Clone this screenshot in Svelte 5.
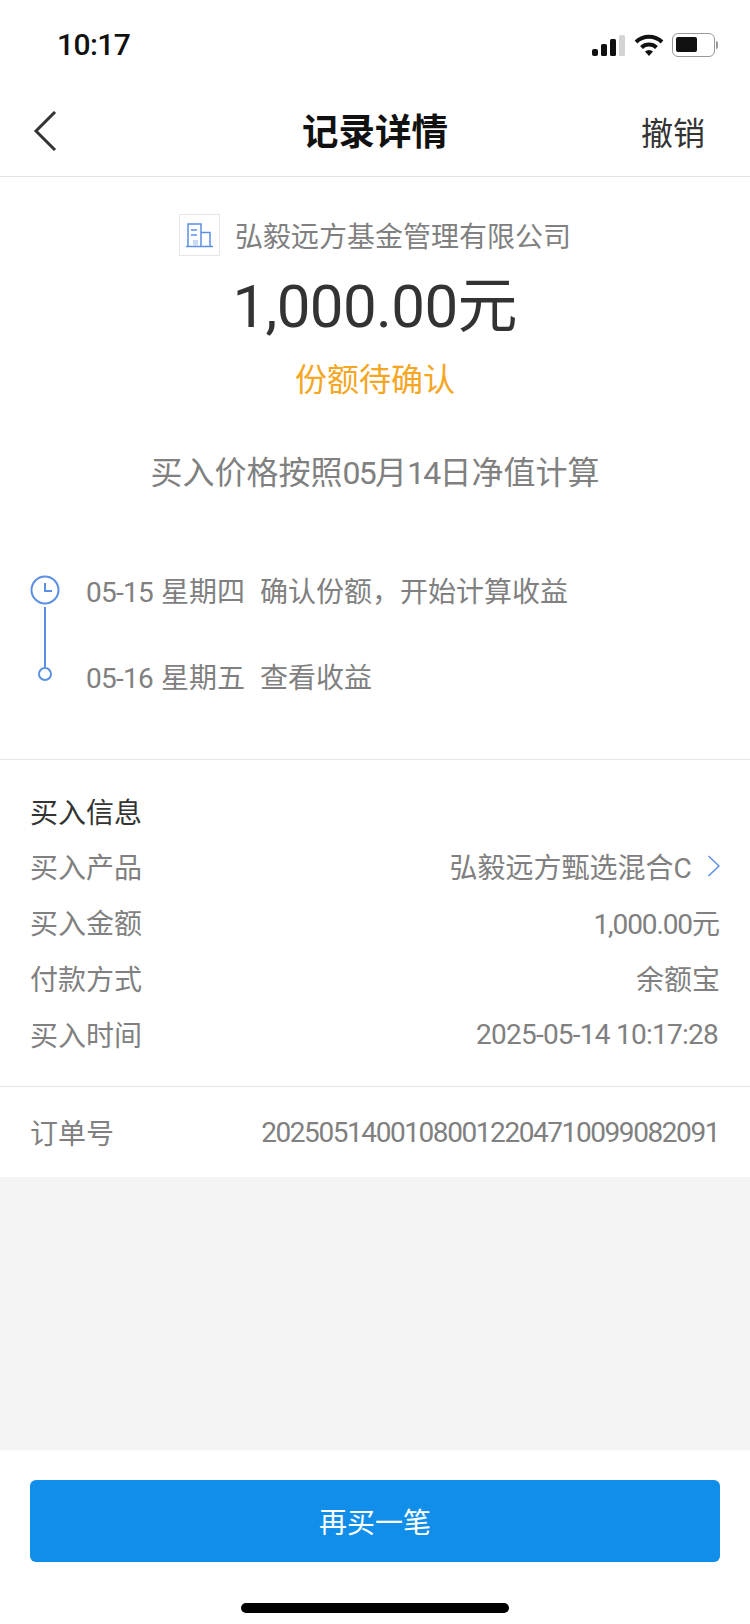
<script>
  const steps = [
    { date: '05-15', day: '星期四', text: '确认份额，开始计算收益' },
    { date: '05-16', day: '星期五', text: '查看收益' }
  ];
</script>

<div class="page">
  <header class="status">
    <span class="time">10:17</span>
    <div class="indicators">
      <svg class="signal" width="33" height="21" viewBox="0 0 33 21">
        <rect x="0" y="14" width="6" height="7" rx="2" fill="#111" />
        <rect x="9" y="9" width="6" height="12" rx="1.5" fill="#111" />
        <rect x="18" y="4" width="6" height="17" rx="1.5" fill="#111" />
        <rect x="27" y="0" width="6" height="21" rx="1.5" fill="#d4d4d4" />
      </svg>
      <svg class="wifi" width="30" height="22" viewBox="0 0 30 22">
        <path d="M2 8a19 19 0 0 1 26 0" fill="none" stroke="#111" stroke-width="4" />
        <path d="M7.5 13.5a11 11 0 0 1 15 0" fill="none" stroke="#111" stroke-width="4" />
        <path d="M11 17.5a6 6 0 0 1 8 0L15 22z" fill="#111" />
      </svg>
      <div class="battery"><span class="level"></span></div>
      <span class="cap"></span>
    </div>
  </header>

  <nav class="nav">
    <svg class="back" width="24" height="40" viewBox="0 0 24 40">
      <path d="M22 1 3 20l19 19" fill="none" stroke="#333" stroke-width="3" />
    </svg>
    <h1>记录详情</h1>
    <span class="cancel">撤销</span>
  </nav>

  <section class="summary">
    <div class="company">
      <span class="logo">
        <svg width="27" height="25" viewBox="0 0 27 25" fill="none" stroke="#5b8fe6" stroke-width="1.5">
          <path d="M0 23.5h27M2 23V1h13v22M15 9.5h9V23" />
          <path d="M5 7h6M5 12h6" />
          <rect x="7" y="17" width="5" height="6" fill="#c9d9f5" stroke="none" />
        </svg>
      </span>
      <span>弘毅远方基金管理有限公司</span>
    </div>
    <div class="amount"><span class="num">1,000.00</span>元</div>
    <div class="state">份额待确认</div>
    <div class="note">买入价格按照<span class="num">05</span>月<span class="num">14</span>日净值计算</div>
  </section>

  <section class="timeline">
    <div class="rail">
      <svg class="clock" width="30" height="30" viewBox="0 0 30 30" fill="none" stroke="#5b8fe6" stroke-width="2">
        <circle cx="15" cy="15" r="13.5" />
        <path d="M15 8v8h7" />
      </svg>
      <span class="line"></span>
      <span class="dot"></span>
    </div>
    <div class="steps">
      {#each steps as s (s.date)}
        <div class="step">
          <span class="num">{s.date}</span>
          <span class="day">{s.day}</span>
          <span class="what">{s.text}</span>
        </div>
      {/each}
    </div>
  </section>

  <section class="info">
    <div class="title">买入信息</div>
    <div class="row">
      <span>买入产品</span>
      <span class="link">
        <span>弘毅远方甄选混合<span class="num">C</span></span>
        <svg width="13" height="22" viewBox="0 0 13 22">
          <path d="M1.5 1 12 11 1.5 21" fill="none" stroke="#5b8fe6" stroke-width="1.5" />
        </svg>
      </span>
    </div>
    <div class="row"><span>买入金额</span><span><span class="num tight">1,000.00</span>元</span></div>
    <div class="row"><span>付款方式</span><span>余额宝</span></div>
    <div class="row"><span>买入时间</span><span class="num stamp">2025-05-14 10:17:28</span></div>
  </section>

  <section class="order">
    <span>订单号</span>
    <span class="num serial">20250514001080012204710099082091</span>
  </section>

  <div class="fill"></div>

  <footer class="foot">
    <button type="button" class="buy">再买一笔</button>
    <span class="home"></span>
  </footer>
</div>

<style>
  :global(body) {
    margin: 0;
    background: #fff;
  }

  .page {
    width: 750px;
    height: 1624px;
    display: flex;
    flex-direction: column;
    font-family: Roboto, "Noto Sans CJK SC", sans-serif;
    color: #808080;
    background: #fff;
    overflow: hidden;
  }

  .num {
    letter-spacing: -0.75px;
  }

  .status {
    height: 90px;
    box-sizing: border-box;
    padding: 0 32px 0 57px;
    display: flex;
    align-items: center;
    justify-content: space-between;
  }

  .time {
    font-size: 30px;
    font-weight: 500;
    letter-spacing: -0.6px;
    color: #111;
    margin-top: -1px;
  }

  .indicators {
    display: flex;
    align-items: center;
    gap: 5px;
  }

  .signal {
    margin-right: 4px;
  }

  .wifi {
    margin-right: 3px;
  }

  .battery {
    width: 43px;
    height: 24px;
    box-sizing: border-box;
    border: 1.5px solid #999;
    border-radius: 6px;
    padding: 3px;
  }

  .level {
    display: block;
    width: 21px;
    height: 15px;
    background: #111;
    border-radius: 2px;
  }

  .cap {
    width: 2px;
    height: 8px;
    background: #999;
    border-radius: 0 2px 2px 0;
    margin-left: -4px;
  }

  .nav {
    height: 87px;
    box-sizing: border-box;
    padding: 0 45px 4px 33px;
    display: flex;
    align-items: center;
    justify-content: space-between;
    border-bottom: 1px solid #e2e2e2;
    position: relative;
  }

  .nav h1 {
    margin: -4px 0 0;
    position: absolute;
    left: 0;
    right: 0;
    text-align: center;
    font-size: 36.5px;
    font-weight: 700;
    color: #111;
    pointer-events: none;
  }

  .cancel {
    font-size: 32px;
    color: #333;
    margin-top: -1px;
  }

  .summary {
    display: flex;
    flex-direction: column;
    align-items: center;
  }

  .company {
    margin-top: 37px;
    height: 42px;
    display: flex;
    align-items: center;
    gap: 15px;
    font-size: 28px;
  }

  .logo {
    width: 41px;
    height: 42px;
    box-sizing: border-box;
    border: 1px solid #e6e6e6;
    display: grid;
    place-items: center;
  }

  .amount {
    margin-top: 15px;
    font-size: 60px;
    line-height: 72px;
    color: #333;
  }

  .amount .num {
    letter-spacing: -0.6px;
  }

  .state {
    margin-top: 16px;
    font-size: 32px;
    line-height: 42px;
    color: #f5a623;
  }

  .note {
    margin-top: 49px;
    font-size: 32px;
    line-height: 46px;
  }

  .note .num {
    letter-spacing: -1.8px;
  }

  .timeline {
    margin-top: 76px;
    padding: 0 30px;
    display: flex;
    gap: 26px;
    height: 187px;
    border-bottom: 1px solid #e6e6e6;
  }

  .rail {
    width: 30px;
    padding-top: 3px;
    display: flex;
    flex-direction: column;
    align-items: center;
  }

  .clock {
    flex: 0 0 auto;
  }

  .line {
    width: 2px;
    height: 60px;
    margin-top: 2px;
    background: #5b8fe6;
  }

  .dot {
    width: 14px;
    height: 14px;
    box-sizing: border-box;
    border: 2px solid #5b8fe6;
    border-radius: 50%;
  }

  .steps {
    display: flex;
    flex-direction: column;
    gap: 44px;
  }

  .step {
    font-size: 28px;
    line-height: 42px;
    display: flex;
  }

  .day {
    margin-left: 8px;
  }

  .what {
    margin-left: 15px;
  }

  .info {
    padding: 32px 30px 24px;
    border-bottom: 1px solid #e6e6e6;
    display: flex;
    flex-direction: column;
  }

  .title {
    font-size: 28px;
    line-height: 44px;
    margin-bottom: 2px;
    color: #333;
  }

  .row {
    height: 56px;
    display: flex;
    align-items: center;
    justify-content: space-between;
    font-size: 28px;
  }

  .tight {
    letter-spacing: -1.1px;
  }

  .stamp {
    margin-right: 2px;
  }

  .link {
    display: flex;
    align-items: center;
    gap: 16px;
  }

  .order {
    height: 90px;
    padding: 0 30px;
    display: flex;
    align-items: center;
    justify-content: space-between;
    font-size: 28px;
  }

  .serial {
    letter-spacing: -1.43px;
    margin-right: 1px;
  }

  .fill {
    flex: 1;
    background: #f4f4f4;
  }

  .foot {
    height: 174px;
    padding: 30px 30px 0;
    box-sizing: border-box;
    position: relative;
  }

  .buy {
    width: 100%;
    height: 82px;
    border: none;
    border-radius: 6px;
    background: #108ee9;
    color: #fff;
    font: inherit;
    font-size: 28px;
  }

  .home {
    position: absolute;
    left: 241px;
    bottom: 11px;
    width: 268px;
    height: 10px;
    border-radius: 5px;
    background: #000;
  }
</style>
